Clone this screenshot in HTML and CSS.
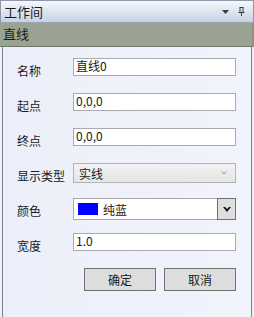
FILE: index.html
```html
<!DOCTYPE html>
<html lang="zh-CN">
<head>
    <meta charset="UTF-8">
    <title>工作间</title>
    <link rel="stylesheet" href="styles.css">
</head>
<body>

<div class="panel">
    <div class="titlebar">
        <span class="title">工作间</span>
        <span class="tools">
            <svg width="7" height="4" viewBox="0 0 7 4"><path d="M0 0H7L3.5 4Z" fill="#3a3a3a"/></svg>
            <svg width="7" height="9" viewBox="0 0 7 9"><path d="M1.5 0.5H5.5M2 0.5V5M5 0.5V5M0.5 5.5H6.5M3.5 5.5V9" stroke="#3a3a3a" fill="none"/></svg>
        </span>
    </div>
    <div class="section">直线</div>

    <div class="body">
        <div class="row">
            <span class="label">名称</span>
            <div class="field">直线0</div>
        </div>
        <div class="row">
            <span class="label">起点</span>
            <div class="field">0,0,0</div>
        </div>
        <div class="row">
            <span class="label">终点</span>
            <div class="field">0,0,0</div>
        </div>
        <div class="row">
            <span class="label">显示类型</span>
            <div class="combo">
                <span>实线</span>
                <svg width="6" height="4" viewBox="0 0 6 4"><path d="M0.5 0.5L3 3L5.5 0.5" stroke="#8a8a8a" fill="none"/></svg>
            </div>
        </div>
        <div class="row">
            <span class="label">颜色</span>
            <div class="color-combo">
                <span class="swatch"></span>
                <span class="color-name">纯蓝</span>
                <span class="drop">
                    <svg width="8" height="5" viewBox="0 0 8 5"><path d="M0 0H2L4 2L6 0H8L4 5Z" fill="#111"/></svg>
                </span>
            </div>
        </div>
        <div class="row">
            <span class="label">宽度</span>
            <div class="field">1.0</div>
        </div>
        <div class="buttons">
            <button>确定</button>
            <button>取消</button>
        </div>
    </div>
</div>

</body>
</html>
```

FILE: styles.css
```css
body {
    margin: 0;
    font-family: "Noto Sans CJK SC", "Liberation Sans", sans-serif;
    font-size: 12px;
    color: #1a1a1a;
}

.panel {
    width: 254px;
    height: 317px;
    display: flex;
    flex-direction: column;
    background: #eef0fa;
}

.titlebar {
    height: 21px;
    display: flex;
    align-items: center;
    justify-content: space-between;
    padding: 0 8px 0 3px;
    border: 1px solid #8e98aa;
    border-bottom: 1px solid #9aa4b5;
    background: linear-gradient(#f5f7fb, #c8d2e4);
    box-sizing: border-box;
    height: 23px;
}

.title {
    font-size: 13px;
    line-height: 17px;
}

.tools {
    display: flex;
    align-items: center;
    gap: 9px;
}

.section {
    height: 24px;
    line-height: 22px;
    padding-left: 3px;
    font-size: 13px;
    background: #9aa392;
    border-bottom: 1px solid #70786a;
    border-right: 2px solid #8a9282;
    box-sizing: border-box;
}

.body {
    flex: 1;
    margin: 0 2px;
    border-left: 1px solid #7c8290;
    border-right: 1px solid #7c8290;
    padding: 11px 0 0 14px;
    background: linear-gradient(90deg, #eceef9, #f2f4fc);
}

.row {
    display: flex;
    align-items: flex-start;
    height: 35px;
}

.label {
    width: 56px;
    line-height: 17px;
    padding-top: 4px;
}

.field {
    width: 163px;
    height: 18px;
    box-sizing: border-box;
    border: 1px solid #a9abb0;
    background: #fff;
    padding-left: 2px;
    line-height: 14px;
}

.combo {
    width: 163px;
    height: 20px;
    box-sizing: border-box;
    border: 1px solid #b4b4b4;
    background: linear-gradient(#f2f2f2, #e6e6e6);
    display: flex;
    align-items: center;
    justify-content: space-between;
    padding: 0 8px 0 5px;
}

.color-combo {
    width: 163px;
    height: 22px;
    box-sizing: border-box;
    border: 1px solid #aaaaaa;
    background: #fff;
    display: flex;
    align-items: center;
    padding-left: 4px;
}

.swatch {
    width: 20px;
    height: 12px;
    background: #0000ff;
}

.color-name {
    flex: 1;
    margin-left: 5px;
}

.drop {
    width: 19px;
    height: 22px;
    margin-right: -1px;
    box-sizing: border-box;
    border: 1px solid #707070;
    background: #dedede;
    display: flex;
    align-items: center;
    justify-content: center;
}

.buttons {
    display: flex;
    gap: 8px;
    padding-left: 67px;
}

button {
    width: 72px;
    height: 23px;
    border: 1px solid #707070;
    background: #dddddd;
    font-family: inherit;
    font-size: 12px;
    color: #1a1a1a;
    padding: 0;
}
```
